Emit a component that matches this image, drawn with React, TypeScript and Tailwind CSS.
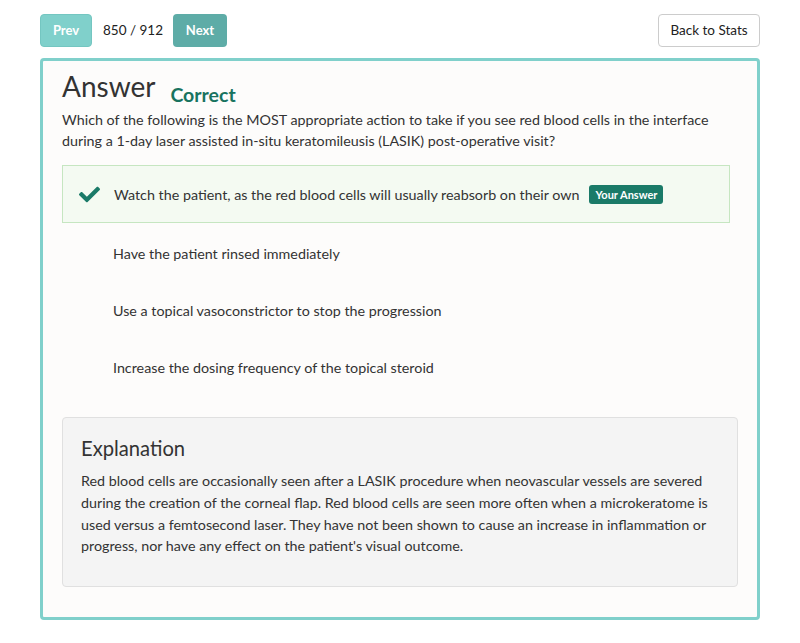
import { FaCheck } from "react-icons/fa";

const options = [
  "Have the patient rinsed immediately",
  "Use a topical vasoconstrictor to stop the progression",
  "Increase the dosing frequency of the topical steroid",
];

export default function App() {
  return (
    <div
      className="min-h-screen bg-white px-[40px] pt-[14px] text-[#333]"
      style={{ fontFamily: "Lato, 'Open Sans', sans-serif" }}
    >
      {/* top bar */}
      <div className="flex items-center justify-between">
        <div className="flex items-center">
          <button className="h-[33px] w-[52px] rounded-[4px] border border-[#74c6c1] bg-[#80d0cb] text-[13px] font-bold text-white">
            Prev
          </button>
          <span className="ml-[11px] mr-[10px] text-[13.5px] text-[#222]">850 / 912</span>
          <button className="h-[33px] w-[54px] rounded-[4px] bg-[#5eaca7] text-[13px] font-bold text-white">
            Next
          </button>
        </div>
        <button className="h-[33px] w-[102px] rounded-[4px] border border-[#ccc] bg-white text-[13.5px] text-[#222]">
          Back to Stats
        </button>
      </div>

      {/* answer card */}
      <div className="mt-[11px] rounded-[4px] border-[3px] border-[#80d0cb] bg-[#fdfcfb] px-[19px] pb-[30px] pt-[8px]">
        <div className="flex items-baseline">
          <h1 className="text-[28px] leading-[34px] text-[#333]">Answer</h1>
          <span className="ml-[15px] translate-y-[5px] text-[19.5px] font-bold text-[#18735f]">Correct</span>
        </div>
        <p className="mt-[5px] text-[14.3px] leading-[21px]">
          Which of the following is the MOST appropriate action to take if you see red blood cells in the interface
          during a 1-day laser assisted in-situ keratomileusis (LASIK) post-operative visit?
        </p>

        <div className="mt-[14px] mr-[8px]">
          <div className="flex h-[58px] items-center border border-[#c6e6c1] bg-[#f4faf2] pl-[16px] pt-[1px]">
            <FaCheck size={21} className="text-[#1a7a68]" />
            <span className="ml-[14px] text-[14.3px]">
              Watch the patient, as the red blood cells will usually reabsorb on their own
            </span>
            <span className="ml-[10px] rounded-[3px] bg-[#1a7a68] px-[6px] py-[2px] text-[11px] font-bold leading-[15px] text-white">
              Your Answer
            </span>
          </div>
          <div className="mt-[2px]">
            {options.map((o) => (
              <div key={o} className="flex h-[57px] items-center pl-[51px] text-[14.3px]">
                {o}
              </div>
            ))}
          </div>
        </div>

        <div className="mt-[21px] rounded-[4px] border border-[#e0e0e0] bg-[#f4f4f4] px-[18px] pb-[29px] pt-[18px]">
          <h2 className="text-[20.2px] leading-[25px] text-[#333]">Explanation</h2>
          <p className="mt-[9px] text-[14.3px] leading-[21.7px]">
            Red blood cells are occasionally seen after a LASIK procedure when neovascular vessels are severed during
            the creation of the corneal flap. Red blood cells are seen more often when a microkeratome is used versus a
            femtosecond laser. They have not been shown to cause an increase in inflammation or progress, nor have any
            effect on the patient's visual outcome.
          </p>
        </div>
      </div>
    </div>
  );
}
